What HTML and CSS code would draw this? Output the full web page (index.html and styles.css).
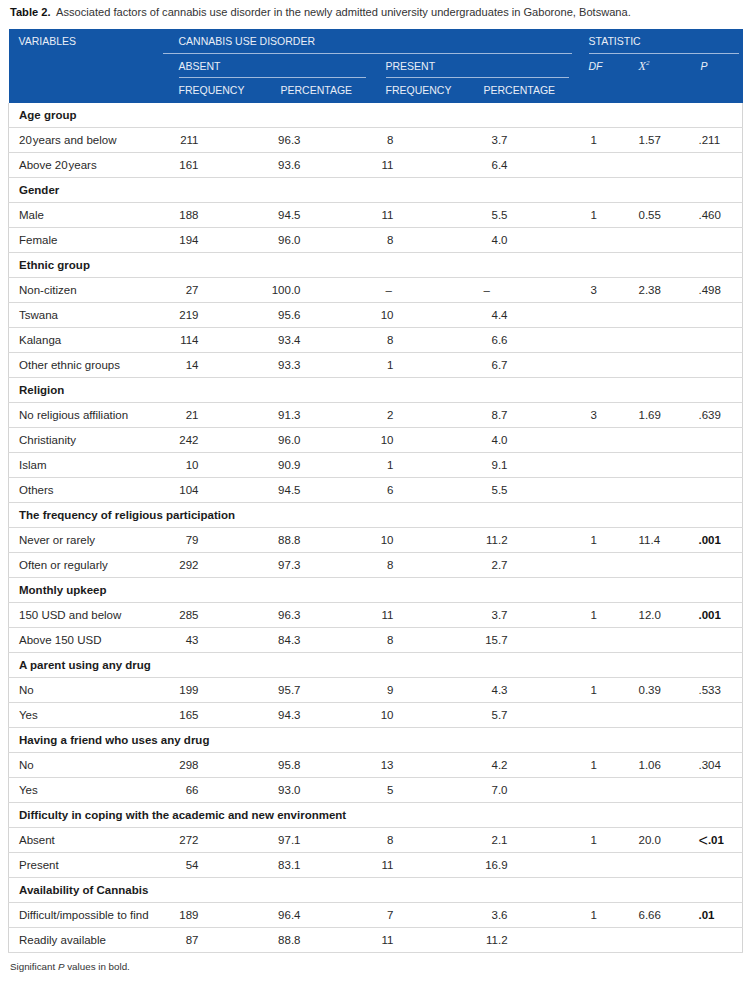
FILE: index.html
```html
<!DOCTYPE html>
<html>
<head>
<meta charset="utf-8">
<link rel="stylesheet" href="styles.css">
</head>
<body>
<p class="caption"><b>Table 2.</b>&nbsp; Associated factors of cannabis use disorder in the newly admitted university undergraduates in Gaborone, Botswana.</p>
<table class="tbl">
  <colgroup>
    <col class="c1"><col class="c2"><col class="c3"><col class="c4"><col class="c5"><col class="c6"><col class="c7"><col class="c8">
  </colgroup>
  <thead>
    <tr>
      <th class="h-var">VARIABLES</th>
      <th colspan="4" class="rule-full">CANNABIS USE DISORDER</th>
      <th colspan="3" class="rule-in">STATISTIC</th>
    </tr>
    <tr>
      <th></th>
      <th colspan="2" class="rule-in">ABSENT</th>
      <th colspan="2" class="rule-in">PRESENT</th>
      <th><i>DF</i></th>
      <th><i class="chi">X<sup>2</sup></i></th>
      <th><i>P</i></th>
    </tr>
    <tr>
      <th></th>
      <th>FREQUENCY</th>
      <th>PERCENTAGE</th>
      <th>FREQUENCY</th>
      <th>PERCENTAGE</th>
      <th></th><th></th><th></th>
    </tr>
  </thead>
  <tbody>
    <tr class="grp"><td colspan="8">Age group</td></tr>
    <tr><td>20&#8202;years and below</td><td class="n2">211</td><td class="n3">96.3</td><td class="n4">8</td><td class="n5">3.7</td><td class="df">1</td><td class="x2">1.57</td><td class="p">.211</td></tr>
    <tr><td>Above 20&#8202;years</td><td class="n2">161</td><td class="n3">93.6</td><td class="n4">11</td><td class="n5">6.4</td><td></td><td></td><td></td></tr>
    <tr class="grp"><td colspan="8">Gender</td></tr>
    <tr><td>Male</td><td class="n2">188</td><td class="n3">94.5</td><td class="n4">11</td><td class="n5">5.5</td><td class="df">1</td><td class="x2">0.55</td><td class="p">.460</td></tr>
    <tr><td>Female</td><td class="n2">194</td><td class="n3">96.0</td><td class="n4">8</td><td class="n5">4.0</td><td></td><td></td><td></td></tr>
    <tr class="grp"><td colspan="8">Ethnic group</td></tr>
    <tr><td>Non-citizen</td><td class="n2">27</td><td class="n3">100.0</td><td class="n4 dash">–</td><td class="n5 dash">–</td><td class="df">3</td><td class="x2">2.38</td><td class="p">.498</td></tr>
    <tr><td>Tswana</td><td class="n2">219</td><td class="n3">95.6</td><td class="n4">10</td><td class="n5">4.4</td><td></td><td></td><td></td></tr>
    <tr><td>Kalanga</td><td class="n2">114</td><td class="n3">93.4</td><td class="n4">8</td><td class="n5">6.6</td><td></td><td></td><td></td></tr>
    <tr><td>Other ethnic groups</td><td class="n2">14</td><td class="n3">93.3</td><td class="n4">1</td><td class="n5">6.7</td><td></td><td></td><td></td></tr>
    <tr class="grp"><td colspan="8">Religion</td></tr>
    <tr><td>No religious affiliation</td><td class="n2">21</td><td class="n3">91.3</td><td class="n4">2</td><td class="n5">8.7</td><td class="df">3</td><td class="x2">1.69</td><td class="p">.639</td></tr>
    <tr><td>Christianity</td><td class="n2">242</td><td class="n3">96.0</td><td class="n4">10</td><td class="n5">4.0</td><td></td><td></td><td></td></tr>
    <tr><td>Islam</td><td class="n2">10</td><td class="n3">90.9</td><td class="n4">1</td><td class="n5">9.1</td><td></td><td></td><td></td></tr>
    <tr><td>Others</td><td class="n2">104</td><td class="n3">94.5</td><td class="n4">6</td><td class="n5">5.5</td><td></td><td></td><td></td></tr>
    <tr class="grp"><td colspan="8">The frequency of religious participation</td></tr>
    <tr><td>Never or rarely</td><td class="n2">79</td><td class="n3">88.8</td><td class="n4">10</td><td class="n5">11.2</td><td class="df">1</td><td class="x2">11.4</td><td class="p"><b>.001</b></td></tr>
    <tr><td>Often or regularly</td><td class="n2">292</td><td class="n3">97.3</td><td class="n4">8</td><td class="n5">2.7</td><td></td><td></td><td></td></tr>
    <tr class="grp"><td colspan="8">Monthly upkeep</td></tr>
    <tr><td>150 USD and below</td><td class="n2">285</td><td class="n3">96.3</td><td class="n4">11</td><td class="n5">3.7</td><td class="df">1</td><td class="x2">12.0</td><td class="p"><b>.001</b></td></tr>
    <tr><td>Above 150 USD</td><td class="n2">43</td><td class="n3">84.3</td><td class="n4">8</td><td class="n5">15.7</td><td></td><td></td><td></td></tr>
    <tr class="grp"><td colspan="8">A parent using any drug</td></tr>
    <tr><td>No</td><td class="n2">199</td><td class="n3">95.7</td><td class="n4">9</td><td class="n5">4.3</td><td class="df">1</td><td class="x2">0.39</td><td class="p">.533</td></tr>
    <tr><td>Yes</td><td class="n2">165</td><td class="n3">94.3</td><td class="n4">10</td><td class="n5">5.7</td><td></td><td></td><td></td></tr>
    <tr class="grp"><td colspan="8">Having a friend who uses any drug</td></tr>
    <tr><td>No</td><td class="n2">298</td><td class="n3">95.8</td><td class="n4">13</td><td class="n5">4.2</td><td class="df">1</td><td class="x2">1.06</td><td class="p">.304</td></tr>
    <tr><td>Yes</td><td class="n2">66</td><td class="n3">93.0</td><td class="n4">5</td><td class="n5">7.0</td><td></td><td></td><td></td></tr>
    <tr class="grp"><td colspan="8">Difficulty in coping with the academic and new environment</td></tr>
    <tr class="tall"><td>Absent</td><td class="n2">272</td><td class="n3">97.1</td><td class="n4">8</td><td class="n5">2.1</td><td class="df">1</td><td class="x2">20.0</td><td class="p lt"><b><span class="big">&lt;</span>.01</b></td></tr>
    <tr><td>Present</td><td class="n2">54</td><td class="n3">83.1</td><td class="n4">11</td><td class="n5">16.9</td><td></td><td></td><td></td></tr>
    <tr class="grp"><td colspan="8">Availability of Cannabis</td></tr>
    <tr><td>Difficult/impossible to find</td><td class="n2">189</td><td class="n3">96.4</td><td class="n4">7</td><td class="n5">3.6</td><td class="df">1</td><td class="x2">6.66</td><td class="p"><b>.01</b></td></tr>
    <tr><td>Readily available</td><td class="n2">87</td><td class="n3">88.8</td><td class="n4">11</td><td class="n5">11.2</td><td></td><td></td><td></td></tr>
  </tbody>
</table>
<p class="note">Significant <i>P</i> values in bold.</p>
</body>
</html>
```
FILE: styles.css
```css
html, body {
  margin: 0;
  padding: 0;
  background: #ffffff;
}
body {
  padding: 0 8px;
  font-family: "Liberation Sans", Arial, sans-serif;
  color: #2a2a2a;
}
.caption {
  margin: 0;
  padding: 5px 0 0 2px;
  height: 24px;
  box-sizing: border-box;
  font-size: 11.1px;
  line-height: 14px;
  color: #333;
}
.caption b {
  color: #111;
}
.tbl {
  width: 734px;
  table-layout: fixed;
  border-collapse: collapse;
  margin-top: 5px;
}
.c1 { width: 154px; }
.c2 { width: 102px; }
.c3 { width: 105px; }
.c4 { width: 98px; }
.c5 { width: 105px; }
.c6 { width: 50px; }
.c7 { width: 62px; }
.c8 { width: 58px; }

.tbl thead th {
  background: #1356a6;
  color: #e9eef7;
  font-weight: normal;
  font-size: 10.5px;
  text-align: left;
  height: 24.7px;
  padding: 0 0 0 16px;
  line-height: 13px;
  vertical-align: middle;
  background-repeat: no-repeat;
}
.tbl thead th.h-var {
  padding-left: 10px;
}
.tbl thead th.rule-full {
  background-image: linear-gradient(#9fb9dc, #9fb9dc);
  background-size: calc(100% - 1px) 1px;
  background-position: left bottom;
}
.tbl thead th.rule-in {
  background-image: linear-gradient(#9fb9dc, #9fb9dc);
  background-size: calc(100% - 20px) 1px;
  background-position: left 16px bottom;
}
.tbl thead i {
  font-style: italic;
}
.chi {
  font-family: "Liberation Serif", "Times New Roman", serif;
  font-size: 12px;
}
.chi sup {
  font-size: 7px;
  vertical-align: 5px;
  line-height: 0;
}

.tbl tbody td {
  height: 24px;
  padding: 0;
  font-size: 11.5px;
  line-height: 14px;
  border-bottom: 1px solid #d9d9d9;
  vertical-align: middle;
  white-space: nowrap;
}
.tbl tbody tr td:first-child {
  padding-left: 10px;
  border-left: 1px solid #d4d4d4;
}
.tbl tbody tr td:last-child {
  border-right: 1px solid #d4d4d4;
}
.tbl tbody tr.grp td {
  font-weight: bold;
  color: #1b1b1b;
  border-right: 1px solid #d4d4d4;
}
.n2 { text-align: right; padding-right: 66px !important; }
.n3 { text-align: right; padding-right: 69px !important; }
.n4 { text-align: right; padding-right: 74px !important; }
.n5 { text-align: right; padding-right: 65px !important; }
.n4.dash { text-align: left; padding-left: 16px !important; padding-right: 0 !important; }
.n5.dash { text-align: left; padding-left: 16px !important; padding-right: 0 !important; }
.df { padding-left: 18px !important; }
.x2 { padding-left: 16px !important; }
.p { padding-left: 14px !important; }
.p b { color: #111; }
.tall td {
  height: 27px;
}
.lt .big {
  font-size: 16px;
  font-weight: normal;
  line-height: 14px;
  vertical-align: -2px;
}
.note {
  margin: 8px 0 0 2px;
  font-size: 9.8px;
  color: #333;
}
```
